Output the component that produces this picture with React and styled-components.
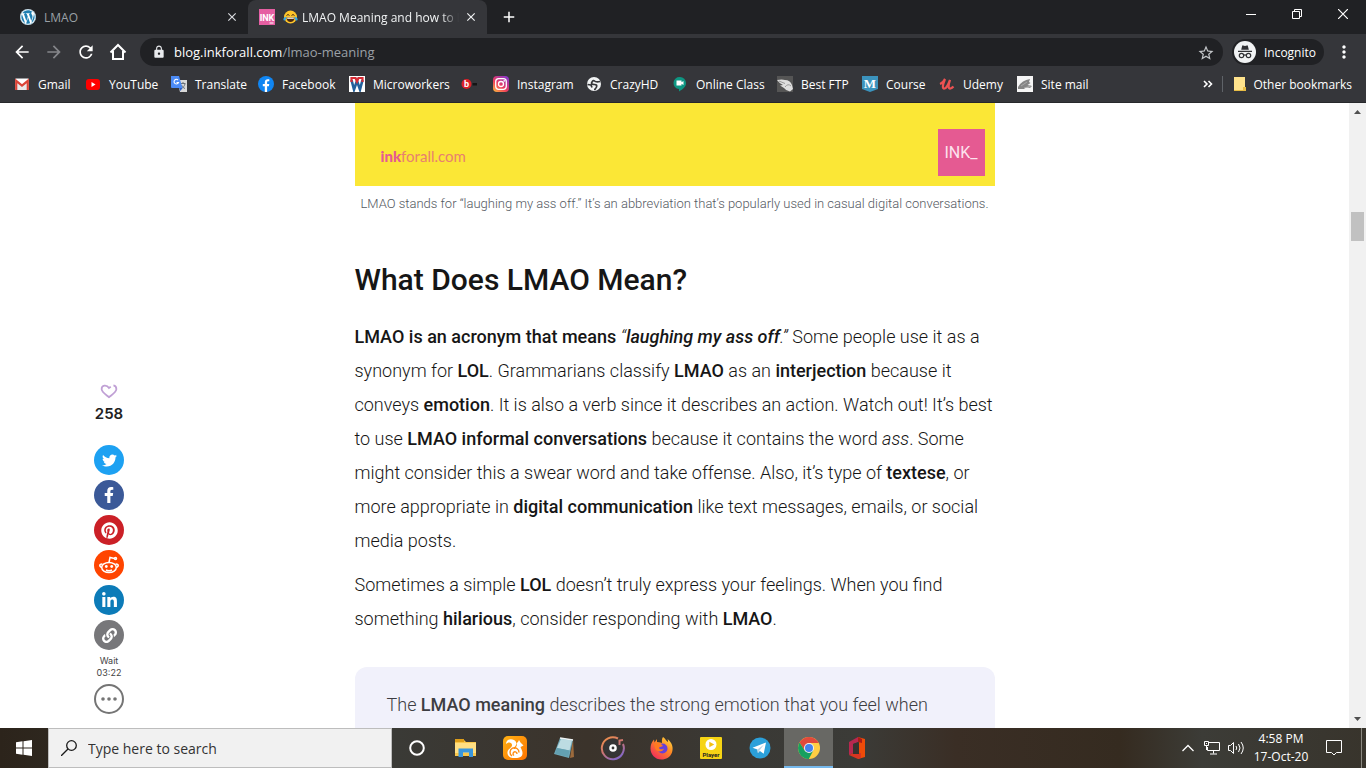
import React from 'react';
import styled, { createGlobalStyle, css } from 'styled-components';
import { MdArrowBack, MdArrowForward, MdRefresh, MdLock, MdStarOutline, MdMoreVert, MdClose, MdAdd } from 'react-icons/md';
import { FaWordpress, FaTwitter, FaFacebookF, FaPinterest, FaLinkedinIn, FaLink } from 'react-icons/fa';

const UI = "'Open Sans', 'Noto Sans', sans-serif";
const COPY = "Roboto, 'Open Sans', sans-serif";

const GlobalStyle = createGlobalStyle`
  *, *::before, *::after { box-sizing: border-box; }
  body { margin: 0; background: #fff; font-family: ${UI}; }
  button, input { font: inherit; color: inherit; border: 0; padding: 0; margin: 0; background: none; }
  a { color: inherit; text-decoration: none; }
  svg { display: block; flex: none; }
`;

const Screen = styled.div`
  display: flex;
  flex-direction: column;
  height: 100vh;
  overflow: hidden;
`;

/* ---------- browser chrome ---------- */

const BrowserBar = styled.header`
  flex: none;
  background: #35363a;
  border-bottom: 1px solid #27282b;
  color: #fff;
  font-size: 12px;
`;

const TabStrip = styled.div`
  display: flex;
  align-items: stretch;
  height: 34px;
  background: #202124;
`;

const Tab = styled.div`
  display: flex;
  align-items: center;
  gap: 8px;
  width: ${(p) => (p.$active ? 239 : 248)}px;
  padding: 0 8px 0 ${(p) => (p.$active ? 11 : 20)}px;
  color: ${(p) => (p.$active ? '#f1f3f4' : '#9aa0a6')};
  ${(p) => p.$active && css`background: #35363a; border-radius: 8px 8px 0 0;`}
`;

const TabTitle = styled.span`
  display: flex;
  align-items: center;
  gap: 4px;
  flex: 1;
  min-width: 0;
  overflow: hidden;
  white-space: nowrap;
  ${(p) => p.$fade && css`
    margin-right: -4px;
    mask-image: linear-gradient(90deg, #000 90%, transparent);
  `}
`;

const WordpressIcon = styled(FaWordpress)`
  border-radius: 50%;
  background: #fff;
  color: #1f7fb2;
`;

const PlainButton = styled.button`
  display: grid;
  place-items: center;
  flex: none;
  width: ${(p) => p.$w || 16}px;
  height: ${(p) => p.$h || 16}px;
  color: ${(p) => p.$color || 'inherit'};
`;

const WindowControls = styled.div`
  display: flex;
  margin-left: auto;
`;

const Toolbar = styled.div`
  display: flex;
  align-items: center;
  height: 36px;
  padding: 0 6px;
`;

const AddressBar = styled.div`
  display: flex;
  align-items: center;
  gap: 8px;
  flex: 1;
  height: 28px;
  margin-left: 6px;
  padding: 0 10px 0 12px;
  border-radius: 14px;
  background: #202124;
  font-size: 13px;
`;

const Url = styled.span`
  flex: 1;
  color: #9aa0a6;
  span { color: #fff; }
`;

const IncognitoChip = styled.button`
  display: flex;
  align-items: center;
  gap: 8px;
  height: 26px;
  margin: 0 4px 0 9px;
  padding: 0 8px 0 2px;
  border-radius: 13px;
  background: #202124;
`;

const BookmarkBar = styled.nav`
  display: flex;
  align-items: center;
  height: 32px;
  padding: 0 14px 4px;
  white-space: nowrap;
`;

const Bookmark = styled.a`
  display: flex;
  align-items: center;
  gap: 8px;
  flex: none;
  width: ${(p) => p.$w}px;
`;

const BookmarkOverflow = styled.div`
  display: flex;
  align-items: center;
  gap: 6px;
  margin-left: auto;
`;

const Divider = styled.span`
  width: 1px;
  height: 16px;
  margin-right: 4px;
  background: #5f6368;
`;

/* ---------- page ---------- */

const Viewport = styled.div`
  display: flex;
  flex: 1;
  min-height: 0;
`;

const Page = styled.main`
  display: grid;
  grid-template-columns: 1fr minmax(0, 640px) 1fr;
  flex: 1;
  overflow: hidden;
  font-family: ${COPY};
`;

const ShareBar = styled.aside`
  display: flex;
  flex-direction: column;
  align-items: center;
  justify-self: start;
  align-self: start;
  gap: 5px;
  width: 40px;
  margin-left: 89px;
  padding-top: 280px;
`;

const LikeButton = styled.button`
  height: 16px;
`;

const LikeCount = styled.strong`
  margin-bottom: 16px;
  font-family: Inter, sans-serif;
  font-size: 15px;
  font-weight: 600;
  line-height: 20px;
  color: #222;
`;

const ShareButton = styled.button`
  display: grid;
  place-items: center;
  width: 30px;
  height: 30px;
  border-radius: 50%;
  color: ${(p) => (p.$outline ? '#757575' : '#fff')};
  background: ${(p) => p.$bg || 'transparent'};
  ${(p) => p.$outline && css`border: 2px solid #757575;`}
`;

const Wait = styled.div`
  font-family: Inter, sans-serif;
  font-size: 9px;
  line-height: 12px;
  text-align: center;
  color: #444;
`;

const Article = styled.article`
  font-size: 18px;
  font-weight: 300;
  line-height: 34px;
  color: #161616;
  white-space: nowrap;
  strong { font-weight: 500; }
`;

const Figure = styled.figure`
  margin: 0;
  color: #54595f;
`;

const Banner = styled.div`
  display: flex;
  align-items: flex-start;
  justify-content: space-between;
  height: 83px;
  padding: 26px 10px 0 26px;
  background: #fbe736;
  color: #e55a92;
`;

const SiteName = styled.span`
  padding-top: 17px;
  font-family: Lato, sans-serif;
  font-size: 15px;
  font-weight: 400;
  line-height: 20px;
  color: #e8806f;
  b { font-weight: 900; color: #e55a92; }
`;

const InkLogo = styled.span`
  display: grid;
  place-items: center;
  width: 47px;
  height: 47px;
  background: #e55a92;
  color: #fde3ee;
  font-size: 16px;
  font-weight: 400;
  line-height: 20px;
`;

const Caption = styled.figcaption`
  padding-top: 8px;
  font-size: 13px;
  line-height: 20px;
  text-align: center;
`;

const Heading = styled.h2`
  margin: 46px 0 20px;
  font-size: 30px;
  font-weight: 500;
  line-height: 40px;
`;

const Paragraph = styled.p`
  margin: 0 0 10px;
`;

const Callout = styled.blockquote`
  margin: 31px 0 0;
  padding: 21px 32px;
  border-radius: 12px;
  background: #f1f1fb;
  color: #3d3d42;
`;

const Scrollbar = styled.div`
  display: flex;
  flex-direction: column;
  align-items: center;
  width: 17px;
  background: #f1f1f1;
  color: #505050;
`;

const Track = styled.div`
  flex: 1;
  padding-top: 92px;
`;

const Thumb = styled.div`
  width: 13px;
  height: 29px;
  background: #c1c1c1;
`;

/* ---------- taskbar ---------- */

const Taskbar = styled.footer`
  display: flex;
  flex: none;
  height: 40px;
  background: linear-gradient(90deg, #2c241b 0%, #3a3a36 29%, #3b332b 43%, #3a3935 54%, #3b3b37 63%, #3a2e25 70%, #352b20 82%, #3c3c37 88%, #38342c 100%);
  color: #fff;
`;

const SearchBox = styled.label`
  display: flex;
  align-items: center;
  gap: 11px;
  width: 344px;
  padding: 0 12px;
  border: 1px solid #bdbdbd;
  background: #f1f1f1;
  color: #1f1f1f;
  input {
    flex: 1;
    min-width: 0;
    font-size: 14px;
    outline: 0;
  }
  input::placeholder { color: #333; opacity: 1; }
`;

const TaskButton = styled.button`
  display: grid;
  place-items: center;
  flex: none;
  width: ${(p) => p.$w || 49}px;
  ${(p) => p.$active && css`
    background: #686864;
    box-shadow: inset 0 -2px #76b9ed;
  `}
`;

const Tray = styled.div`
  display: flex;
  align-items: stretch;
  margin-left: auto;
  padding-right: 4px;
`;

const Clock = styled.time`
  width: 66px;
  padding-top: 2px;
  font-size: 12px;
  line-height: 18px;
  text-align: center;
  white-space: nowrap;
`;

const ShowDesktop = styled.span`
  width: 1px;
  margin-left: 7px;
  background: #8a8880;
`;

/* ---------- drawings ---------- */

const IconText = styled.text`
  font-family: ${(p) => (p.$serif ? "'Liberation Serif', serif" : 'Roboto, sans-serif')};
  font-weight: 700;
  text-anchor: middle;
`;

const InkFavicon = () => (
  <svg width="16" height="16" viewBox="0 0 16 16"><rect width="16" height="16" fill="#e55fa2" /><IconText x="8" y="12" fontSize="9" fill="#fff">INK</IconText><path d="M10.500 14h4" stroke="#fff" /></svg>
);

const LaughIcon = () => (
  <svg width="15" height="14" viewBox="0 0 15 14">
    <circle cx="7.500" cy="7" r="6.500" fill="#ffc529" />
    <path d="M3.500 7.500h8c0 6-8 6-8 0z" fill="#4a2a12" /><path d="M4.200 7.600h6.600v1.200H4.200z" fill="#fff" />
    <path d="M3.500 5.500l1.500-1 1.500 1M8.500 5.500l1.500-1 1.500 1" fill="none" stroke="#4a2a12" />
    <path d="M3.500 6.500C1 7.500 0 8.500.500 10c1.500 1.500 3-.500 3-3.500zM11.500 6.500c2.500 1 3.500 2 3 3.500-1.500 1.500-3-.500-3-3.500z" fill="#35a8e8" />
  </svg>
);

const HomeIcon = () => (
  <svg width="18" height="18" viewBox="0 0 18 18" fill="none" stroke="currentColor" strokeWidth="2"><path d="M1.500 9.500L9 2l7.500 7.500M4 8v8h10V8" /></svg>
);

const IncognitoIcon = () => (
  <svg width="22" height="22" viewBox="0 0 22 22">
    <circle cx="11" cy="11" r="11" fill="#f1f3f4" />
    <path d="M7.200 8.700l1-3.900q.2-.6.900-.4l1.900.5 1.900-.5q.7-.2.900.4l1 3.900zM4 9.800h14v1.200H4z" fill="#303134" />
    <g fill="none" stroke="#303134" strokeWidth="1.200"><circle cx="7.500" cy="14.500" r="2.200" /><circle cx="14.500" cy="14.500" r="2.200" /><path d="M9.700 14.200q1.300-.8 2.600 0" /></g>
  </svg>
);

const GmailIcon = () => (
  <svg width="16" height="16" viewBox="0 0 16 16"><rect x="1" y="3" width="14" height="11" rx="1" fill="#e9e9e9" /><path d="M1 3l7 6 7-6-1-.500H2z" fill="#fff" /><path d="M2.200 14V4.800L8 9.600l5.800-4.800V14" fill="none" stroke="#db4437" strokeWidth="2.200" /></svg>
);
const YouTubeIcon = () => (
  <svg width="16" height="16" viewBox="0 0 16 16"><rect x="1" y="3" width="14" height="11" rx="3" fill="#f00" /><path d="M6.500 6l4 2.500-4 2.500z" fill="#fff" /></svg>
);
const TranslateIcon = () => (
  <svg width="16" height="16" viewBox="0 0 16 16"><path d="M6 4h10v12H9z" fill="#d8d8d8" /><path d="M9.500 7.500h5M12 6v1.500M14 8c-.500 2-2 3.500-3.500 4.500M10.500 9c1 2 2 3 3.500 3.500" stroke="#687078" fill="none" /><path d="M0 0h8l3.500 12H1q-1 0-1-1z" fill="#4c8bf5" /><path d="M7 4A2.300 2.300 0 1 0 7.500 6.500H5.500" fill="none" stroke="#fff" strokeWidth="1.100" /><path d="M8 12h3.500L9.500 15z" fill="#2b5fc4" /></svg>
);
const FacebookIcon = () => (
  <svg width="16" height="16" viewBox="0 0 16 16"><circle cx="8" cy="8" r="8" fill="#1086f3" /><path d="M6.800 16V10.300H4.800V8h2V6.400c0-2.200 1.200-3.200 3-3.200l1.500.1v2h-1C9.300 5.300 9.100 5.800 9.100 6.500V8h2.200l-.4 2.300H9.100V16z" fill="#fff" /></svg>
);
const MicroIcon = () => (
  <svg width="16" height="16" viewBox="0 0 16 16"><rect width="16" height="16" fill="#fff" /><path d="M2.500 4L5 13.500 8 5l3 8.500L13.500 4" fill="none" stroke="#22609c" strokeWidth="2.600" /><path d="M2.500 6V2h4L8 5.500 9.500 2h4v4" fill="none" stroke="#d62b35" strokeWidth="2.200" /></svg>
);
const BIcon = () => (
  <svg width="16" height="16" viewBox="0 0 16 16"><circle cx="5.500" cy="8" r="5" fill="#dd2029" /><IconText x="5.500" y="11" fontSize="9" fill="#fff">b</IconText><path d="M11.500 7h4.500v2.500h-4.500z" fill="#151515" /></svg>
);
const InstagramIcon = () => (
  <svg width="16" height="16" viewBox="0 0 16 16"><defs><linearGradient id="ig" x1="0" y1="1" x2=".8" y2="0"><stop offset="0" stopColor="#fdc13c" /><stop offset=".45" stopColor="#ef3d5c" /><stop offset="1" stopColor="#8a36c8" /></linearGradient></defs><rect width="16" height="16" rx="4" fill="url(#ig)" /><g fill="none" stroke="#fff" strokeWidth="1.300"><rect x="2.700" y="2.700" width="10.600" height="10.600" rx="3" /><circle cx="8" cy="8" r="2.500" /></g><circle cx="11.200" cy="4.900" r=".8" fill="#fff" /></svg>
);
const GlobeIcon = () => (
  <svg width="16" height="16" viewBox="0 0 16 16"><circle cx="8" cy="8" r="7" fill="#f1f3f4" /><path d="M14.200 5.500Q10 6.500 8.500 5T5.500 7q0 1.500 3 1.500t2 2.500-2.500 2.500M1.500 8.500l3.500.5 1 2.500" fill="none" stroke="#35363a" strokeWidth="1.700" /></svg>
);
const MeetIcon = () => (
  <svg width="16" height="16" viewBox="0 0 16 16"><path d="M8 1a6 6 0 0 0-1 12v2.500C11 13 14 11 14 7a6 6 0 0 0-6-6z" fill="#0e9682" /><path d="M4.500 4.500h5v1.700l2-1.200v4l-2-1.200v1.700h-5z" fill="#fff" /></svg>
);
const FtpIcon = () => (
  <svg width="16" height="16" viewBox="0 0 16 16"><rect width="16" height="16" fill="#555" /><path d="M0 4Q5 3 8 4q5 0 7 5l1 4-3 2.500q-4-.5-6-3.500L3 9.500l3-.5Q2 7 0 4z" fill="#dedede" /><path d="M2 5l6 2.500M8 11q3-4 6-1" stroke="#999" fill="none" /></svg>
);
const CourseIcon = () => (
  <svg width="16" height="16" viewBox="0 0 16 16"><path d="M0 0h16v13l-8 3-8-3z" fill="#3b93bd" /><IconText $serif x="8" y="11.500" fontSize="13" fill="#fff">M</IconText></svg>
);
const UdemyIcon = () => (
  <svg width="16" height="16" viewBox="0 0 16 16"><path d="M1 8Q4 7 6 3q-4 10-.5 9.500Q8 12 11 4q-3 9 .5 8.500 1.500-.5 3-2" fill="none" stroke="#ec5252" strokeWidth="2.200" /></svg>
);
const MailIcon = () => (
  <svg width="16" height="16" viewBox="0 0 16 16"><rect width="16" height="16" fill="#f5f5f5" /><path d="M1 11Q5 4 13 3l-1 3 1.500 1-3 2 4.500 1-2 2-4-1-2 2H1z" fill="#858585" /><path d="M4 10l6-4M7 12l7-2" stroke="#aaa" /></svg>
);
const FolderIcon = () => (
  <svg width="14" height="16" viewBox="0 0 14 16"><path d="M1 1h11v10l1 1v2.500H1z" fill="#ffe38c" /><path d="M10 15v-4h3v4z" fill="#e8bd45" /><path d="M1 14.500h12" stroke="#e8bd45" /></svg>
);

const bookmarks = [
  ['Gmail', 71, GmailIcon], ['YouTube', 86, YouTubeIcon], ['Translate', 87, TranslateIcon], ['Facebook', 91, FacebookIcon],
  ['Microworkers', 112, MicroIcon], ['', 32, BIcon], ['Instagram', 93, InstagramIcon], ['CrazyHD', 86, GlobeIcon],
  ['Online Class', 105, MeetIcon], ['Best FTP', 85, FtpIcon], ['Course', 77, CourseIcon], ['Udemy', 78, UdemyIcon], ['Site mail', 80, MailIcon],
];

const HeartIcon = () => (
  <svg width="20" height="16" viewBox="0 0 20 18"><path d="M12 4.200L10 5.600C7.500 1.500 1.500 2 1.700 7c.3 3.200 4 5.500 8.300 9 4.300-3.500 8-5.800 8.300-9 .1-2.500-1.600-4-3.300-4.300" fill="none" stroke="#c0a0d5" strokeWidth="2" /></svg>
);
const RedditIcon = () => (
  <svg width="22" height="20" viewBox="0 0 22 20" fill="none" stroke="#fff" strokeWidth="1.500"><ellipse cx="11" cy="12.500" rx="7.300" ry="5" /><path d="M4.500 9.500C2 8 .5 11 3.500 12.500M17.500 9.500C20 8 21.500 11 18.500 12.500M11 7.500l1-5 4.500 1M8 15q3 1.600 6 0" /><circle cx="17.500" cy="3.500" r="1" /><g fill="#fff" stroke="none"><circle cx="8.300" cy="11.500" r="1.400" /><circle cx="13.700" cy="11.500" r="1.400" /></g></svg>
);
const DotsIcon = () => (
  <svg width="20" height="6" viewBox="0 0 20 6" fill="currentColor"><circle cx="4" cy="3" r="1.800" /><circle cx="10" cy="3" r="1.800" /><circle cx="16" cy="3" r="1.800" /></svg>
);

const shares = [
  ['Twitter', '#1da1f2', <FaTwitter size={15} />], ['Facebook', '#3b5998', <FaFacebookF size={16} />],
  ['Pinterest', '#cb2027', <FaPinterest size={17} />], ['Reddit', '#ff4500', <RedditIcon />],
  ['LinkedIn', '#0c7bb8', <FaLinkedinIn size={17} />], ['Copy link', '#77777a', <FaLink size={15} />],
];

const CortanaIcon = () => (
  <svg width="18" height="18" viewBox="0 0 18 18"><circle cx="9" cy="9" r="6.800" fill="none" stroke="#fff" strokeWidth="2" /></svg>
);
const ExplorerIcon = () => (
  <svg width="24" height="24" viewBox="0 0 24 24"><path d="M1 4h9l2 2h10v14H1z" fill="#f9c74b" /><path d="M1 3h9v3H1z" fill="#dd9d19" /><path d="M1 7h21v10H1z" fill="#ffdf83" /><path d="M4.500 21v-8.500h14.500V21h-4v-4.500H9V21z" fill="#3996dc" /></svg>
);
const UcIcon = () => (
  <svg width="24" height="24" viewBox="0 0 24 24"><defs><linearGradient id="uc" x2="1" y2="1"><stop stopColor="#ffb114" /><stop offset="1" stopColor="#ff7400" /></linearGradient></defs><rect width="24" height="24" rx="5" fill="url(#uc)" /><path d="M3 8C3 4 7 2 11 4c3 1.500 3 5 .5 7-1.500 1.300-1 2.500.5 2l2-4q-1-2 1-3l1-2 1.500 2.500 3 3-3 1.500c1 3 3 5 1.500 8.500-1 2-4 2.500-7 2.500-5 0-8-2-7.500-6 .5-3 4-4 4.500-6.500C9.500 6 5 5.500 3 8z" fill="#fff" /><path d="M9 20a4.500 4.500 0 1 1 7-3.500M11 19.500a2 2 0 1 1 3-1.500" fill="none" stroke="#ff8c12" strokeWidth="1.400" /></svg>
);
const NotepadIcon = () => (
  <svg width="24" height="24" viewBox="0 0 24 24"><path d="M21 3l1 18-4 1z" fill="#9c6a3c" /><path d="M8 2l13 2-4 18-15-4z" fill="#70a9b8" /><path d="M9 3l11 1.500-2.500 10L5 12z" fill="#bddce2" /><path d="M5 12l12.500 2.500L16 21 3 17.500z" fill="#63a0b1" /><path d="M8 2l13 2" stroke="#eef4f5" strokeWidth="1.500" /></svg>
);
const GrooveIcon = () => (
  <svg width="26" height="26" viewBox="0 0 26 26"><defs><linearGradient id="gr" x2=".6" y2="1"><stop stopColor="#f59345" /><stop offset=".55" stopColor="#cb7474" /><stop offset="1" stopColor="#8768c3" /></linearGradient></defs><circle cx="13" cy="13" r="9" fill="#353536" /><path d="M18 3.500A11 11 0 1 0 23 9M19.500 10V5.500L23 5" fill="none" stroke="url(#gr)" strokeWidth="2" /><circle cx="13" cy="13" r="2.600" fill="none" stroke="#fff" strokeWidth="2.400" /></svg>
);
const FirefoxIcon = () => (
  <svg width="24" height="24" viewBox="0 0 24 24"><defs><linearGradient id="ff" x1="1" y1="0" x2=".2" y2="1"><stop stopColor="#ffea48" /><stop offset=".45" stopColor="#ff8a23" /><stop offset="1" stopColor="#f0285e" /></linearGradient></defs><path d="M13 1c3 2 3 4 5 5 0-1 0-2-.5-3 5 4 6 9 4.500 13.500C20.500 21 16 23.500 11.500 23.500 5 23.500.5 18.500.5 12.500c0-3.500 1-5.500 2-7L4 3.500l.5 3L7 3v3c3 .5 4 .500 5 1 0-2-.5-4 1-6z" fill="url(#ff)" /><circle cx="12.500" cy="12.500" r="5" fill="#6640d9" /><path d="M4 8q4-2 7 0l2 2-4 1.500c0 2 3 2.500 5 1-1 4-8 4-9-.500z" fill="#ff7a20" /></svg>
);
const PlayerIcon = () => (
  <svg width="24" height="24" viewBox="0 0 24 24"><rect x="1" y="1" width="22" height="22" rx="1" fill="#f6d414" /><circle cx="12" cy="8.500" r="5.500" fill="#fff" /><path d="M10.300 5.700l5 2.800-5 2.800z" fill="#f2bf12" /><IconText x="12" y="20.500" fontSize="6" fill="#222">Player</IconText></svg>
);
const TelegramIcon = () => (
  <svg width="22" height="22" viewBox="0 0 22 22"><circle cx="11" cy="11" r="10.500" fill="#2ba0da" /><path d="M3.500 10.800L17 5.500l-2.300 11.200-3.800-2.700-2 2-.5-3.500z" fill="#fff" /><path d="M8.400 12.500L15 7.500l-4.500 6-1.600 2.500z" fill="#b8d6e8" /></svg>
);
const ChromeIcon = () => (
  <svg width="22" height="22" viewBox="0 0 22 22"><circle cx="11" cy="11" r="11" fill="#ffce43" /><path d="M1.500 5.500A11 11 0 0 1 20.500 5.500L20.800 6H11L6.700 13.500z" fill="#e0493c" /><path d="M1.500 5.500A11 11 0 0 0 10.800 22L15.300 13.500 6.700 13.500z" fill="#16a060" /><circle cx="11" cy="11" r="5" fill="#f1f1f1" /><circle cx="11" cy="11" r="4" fill="#4382ee" /></svg>
);
const OfficeIcon = () => (
  <svg width="24" height="24" viewBox="0 0 24 24"><path d="M3 6l9-5v5L7 8v9l-4 2z" fill="#b8284f" /><path d="M12 1l7 2v18l-7 2z" fill="#ee4b09" /><path d="M12 1v5l4 1V3z" fill="#a81d18" /><path d="M3 19l4-2h8v5l-3 1z" fill="#d83521" /><path d="M7 8l6-2v12H7z" fill="#37332f" /></svg>
);

const apps = [
  ['Cortana', CortanaIcon], ['File Explorer', ExplorerIcon], ['UC Browser', UcIcon], ['Notepad', NotepadIcon], ['Groove Music', GrooveIcon],
  ['Firefox', FirefoxIcon], ['Player', PlayerIcon], ['Telegram', TelegramIcon], ['Chrome', ChromeIcon], ['Office', OfficeIcon],
];

function Browser() {
  return (
    <BrowserBar>
      <TabStrip>
        <Tab>
          <WordpressIcon size={16} />
          <TabTitle>LMAO</TabTitle>
          <PlainButton aria-label="Close tab" $color="#dadce0"><MdClose size={14} /></PlainButton>
        </Tab>
        <Tab $active>
          <InkFavicon />
          <TabTitle $fade><LaughIcon />LMAO Meaning and how to L</TabTitle>
          <PlainButton aria-label="Close tab" $color="#f1f3f4"><MdClose size={14} /></PlainButton>
        </Tab>
        <PlainButton aria-label="New tab" $w={44} $h={34}><MdAdd size={18} /></PlainButton>
        <WindowControls>
          <PlainButton aria-label="Minimize" $w={46} $h={28}><svg width="10" height="10" viewBox="0 0 10 10"><path d="M0 5.500h10" stroke="#fff" /></svg></PlainButton>
          <PlainButton aria-label="Restore" $w={46} $h={28}><svg width="10" height="10" viewBox="0 0 10 10" fill="none" stroke="#fff"><path d="M.5 2.500h7v7h-7zM2.500 2.500v-2h7v7h-2" /></svg></PlainButton>
          <PlainButton aria-label="Close" $w={46} $h={28}><svg width="10" height="10" viewBox="0 0 10 10"><path d="M0 0l10 10M10 0L0 10" stroke="#fff" strokeWidth="1.200" /></svg></PlainButton>
        </WindowControls>
      </TabStrip>
      <Toolbar>
        <PlainButton aria-label="Back" $w={32} $h={32}><MdArrowBack size={20} /></PlainButton>
        <PlainButton aria-label="Forward" $w={32} $h={32} $color="#85868a"><MdArrowForward size={20} /></PlainButton>
        <PlainButton aria-label="Reload" $w={32} $h={32}><MdRefresh size={20} /></PlainButton>
        <PlainButton aria-label="Home" $w={32} $h={32}><HomeIcon /></PlainButton>
        <AddressBar>
          <MdLock size={14} color="#e8eaed" />
          <Url><span>blog.inkforall.com</span>/lmao-meaning</Url>
          <PlainButton aria-label="Bookmark this tab" $color="#c4c7ca"><MdStarOutline size={18} /></PlainButton>
        </AddressBar>
        <IncognitoChip><IncognitoIcon />Incognito</IncognitoChip>
        <PlainButton aria-label="Menu" $w={32} $h={32}><MdMoreVert size={20} /></PlainButton>
      </Toolbar>
      <BookmarkBar>
        {bookmarks.map(([name, w, Icon]) => (
          <Bookmark key={w + name} href="#" $w={w} aria-label={name || 'b'}><Icon />{name}</Bookmark>
        ))}
        <BookmarkOverflow>
          <PlainButton aria-label="More bookmarks"><svg width="10" height="8" viewBox="0 0 10 8" fill="none" stroke="#fff" strokeWidth="1.600"><path d="M1 1l3 3-3 3M5.500 1l3 3-3 3" /></svg></PlainButton>
          <Divider />
          <FolderIcon />
          <a href="#">Other bookmarks</a>
        </BookmarkOverflow>
      </BookmarkBar>
    </BrowserBar>
  );
}

function Post() {
  return (
    <Article>
      <Figure>
        <Banner>
          <SiteName><b>ink</b>forall.com</SiteName>
          <InkLogo>INK_</InkLogo>
        </Banner>
        <Caption>LMAO stands for “laughing my ass off.” It’s an abbreviation that’s popularly used in casual digital conversations.</Caption>
      </Figure>
      <Heading>What Does LMAO Mean?</Heading>
      <Paragraph>
        <strong>LMAO is an acronym that means</strong> <em>“<strong>laughing my ass off</strong>.”</em> Some people use it as a<br />
        synonym for <strong>LOL</strong>. Grammarians classify <strong>LMAO</strong> as an <strong>interjection</strong> because it<br />
        conveys <strong>emotion</strong>. It is also a verb since it describes an action. Watch out! It’s best<br />
        to use <strong>LMAO informal conversations</strong> because it contains the word <em>ass</em>. Some<br />
        might consider this a swear word and take offense. Also, it’s type of <strong>textese</strong>, or<br />
        more appropriate in <strong>digital communication</strong> like text messages, emails, or social<br />
        media posts.
      </Paragraph>
      <Paragraph>
        Sometimes a simple <strong>LOL</strong> doesn’t truly express your feelings. When you find<br />
        something <strong>hilarious</strong>, consider responding with <strong>LMAO</strong>.
      </Paragraph>
      <Callout>
        The <strong>LMAO meaning</strong> describes the strong emotion that you feel when<br />
        you find something extremely funny. Whether you read it or a friend
      </Callout>
    </Article>
  );
}

export default function App() {
  return (
    <Screen>
      <GlobalStyle />
      <Browser />
      <Viewport>
        <Page>
          <ShareBar>
            <LikeButton aria-label="Like"><HeartIcon /></LikeButton>
            <LikeCount>258</LikeCount>
            {shares.map(([name, bg, icon]) => <ShareButton key={name} aria-label={name} $bg={bg}>{icon}</ShareButton>)}
            <Wait>Wait<br />03:22</Wait>
            <ShareButton aria-label="More" $outline><DotsIcon /></ShareButton>
          </ShareBar>
          <Post />
        </Page>
        <Scrollbar aria-hidden="true">
          <svg width="17" height="17" viewBox="0 0 17 17"><path d="M5 11l3.500-4 3.500 4z" fill="currentColor" /></svg>
          <Track><Thumb /></Track>
          <svg width="17" height="17" viewBox="0 0 17 17"><path d="M5 6l3.500 4L12 6z" fill="currentColor" /></svg>
        </Scrollbar>
      </Viewport>
      <Taskbar>
        <TaskButton aria-label="Start" $w={48}>
          <svg width="16" height="16" viewBox="0 0 16 16" fill="#fff"><path d="M0 2.200l6.500-.9v6.200H0zM7.500 1.200L16 0v7.500H7.500zM0 8.500h6.500v6.200L0 13.800zM7.500 8.500H16V16l-8.500-1.200z" /></svg>
        </TaskButton>
        <SearchBox>
          <svg width="16" height="16" viewBox="0 0 16 16" fill="none" stroke="#1a1a1a" strokeWidth="1.300"><circle cx="10.500" cy="5.500" r="4.800" /><path d="M7 9L0 16" /></svg>
          <input type="text" placeholder="Type here to search" aria-label="Type here to search" />
        </SearchBox>
        {apps.map(([name, Icon]) => <TaskButton key={name} aria-label={name} $active={name === 'Chrome'}><Icon /></TaskButton>)}
        <Tray>
          <TaskButton aria-label="Show hidden icons" $w={24}><svg width="12" height="8" viewBox="0 0 12 8"><path d="M.5 7L6 1.500 11.500 7" fill="none" stroke="#fff" strokeWidth="1.300" /></svg></TaskButton>
          <TaskButton aria-label="Network" $w={24}><svg width="16" height="14" viewBox="0 0 16 14" fill="none" stroke="#fff"><path d="M5 1.500h10.500v8h-12V6M.5.500h4v4h-4zM2.500 4.500V9M9.500 9.500v3M6 13h7M2 2.500h1" /></svg></TaskButton>
          <TaskButton aria-label="Volume" $w={24}><svg width="17" height="14" viewBox="0 0 17 14" fill="none" stroke="#fff"><path d="M.5 4.500h2l3-3v11l-3-3h-2zM8 5q1.500 2 0 4M10.500 3q3 4 0 8M13 1q4.500 6 0 12" /></svg></TaskButton>
          <Clock>4:58 PM<br />17-Oct-20</Clock>
          <TaskButton aria-label="Notifications" $w={40}><svg width="16" height="16" viewBox="0 0 16 16"><path d="M.5.500h15v12h-5L8 15l-2.500-2.500h-5z" fill="none" stroke="#fff" /></svg></TaskButton>
          <ShowDesktop />
        </Tray>
      </Taskbar>
    </Screen>
  );
}
